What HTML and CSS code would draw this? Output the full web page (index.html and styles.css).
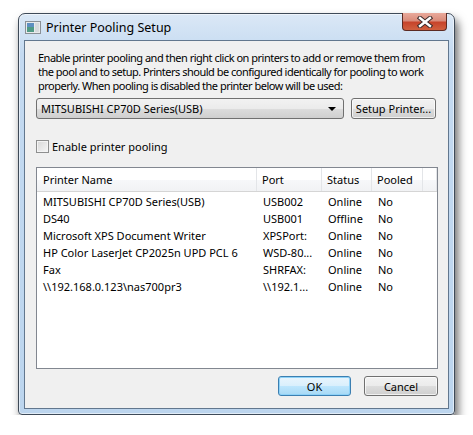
FILE: index.html
```html
<!DOCTYPE html>
<html lang="en">
<head>
<meta charset="UTF-8">
<meta name="viewport" content="width=device-width, initial-scale=1.0">
<title>Printer Pooling Setup</title>
<link rel="stylesheet" href="styles.css">
</head>
<body>

<div class="window">
    <div class="titlebar">
        <svg class="app-icon" width="16" height="13" viewBox="0 0 16 13">
            <rect x="0.5" y="0.5" width="15" height="12" fill="#e8eaec" stroke="#8a9096"/>
            <rect x="2" y="2" width="7" height="9" fill="#4f9a86"/>
            <rect x="2" y="2" width="7" height="4" fill="#5d8fc0"/>
            <rect x="10" y="2" width="4" height="9" fill="#d6dadd"/>
        </svg>
        <span class="title">Printer Pooling Setup</span>
        <div class="close">
            <svg width="16" height="12" viewBox="0 0 16 12">
                <path d="M3 2 L13 10 M13 2 L3 10" stroke="#3a2a2a" stroke-width="4.4" stroke-linecap="square"/>
                <path d="M3 2 L13 10 M13 2 L3 10" stroke="#ffffff" stroke-width="2.4" stroke-linecap="square"/>
            </svg>
        </div>
    </div>

    <div class="client">
        <p class="intro">Enable printer pooling and then right click on printers to add or remove them from<br>the pool and to setup. Printers should be configured identically for pooling to work<br>properly. When pooling is disabled the printer below will be used:</p>

        <div class="printer-row">
            <div class="combo">
                <span>MITSUBISHI CP70D Series(USB)</span>
                <span class="arrow"></span>
            </div>
            <button class="btn setup">Setup Printer...</button>
        </div>

        <label class="check"><span class="box"></span>Enable printer pooling</label>

        <div class="list">
            <div class="list-head">
                <div>Printer Name</div>
                <div>Port</div>
                <div>Status</div>
                <div>Pooled</div>
                <div></div>
            </div>
            <div class="list-row"><div>MITSUBISHI CP70D Series(USB)</div><div>USB002</div><div>Online</div><div>No</div></div>
            <div class="list-row"><div>DS40</div><div>USB001</div><div>Offline</div><div>No</div></div>
            <div class="list-row"><div>Microsoft XPS Document Writer</div><div>XPSPort:</div><div>Online</div><div>No</div></div>
            <div class="list-row"><div>HP Color LaserJet CP2025n UPD PCL 6</div><div>WSD-80...</div><div>Online</div><div>No</div></div>
            <div class="list-row"><div>Fax</div><div>SHRFAX:</div><div>Online</div><div>No</div></div>
            <div class="list-row"><div>\\192.168.0.123\nas700pr3</div><div>\\192.1...</div><div>Online</div><div>No</div></div>
        </div>

        <div class="actions">
            <button class="btn default">OK</button>
            <button class="btn cancel">Cancel</button>
        </div>
    </div>
</div>

</body>
</html>
```

FILE: styles.css
```css
body {
    margin: 0;
    padding: 13px 0 0 18px;
    background-color: #fff;
    font-family: "Noto Sans", "Open Sans", sans-serif;
    font-size: 11px;
    color: #000;
}
.window {
    width: 437px;
    height: 402px;
    box-sizing: border-box;
    border: 1px solid #3e4a58;
    border-radius: 7px 7px 4px 4px;
    background: linear-gradient(#dbe8f6, #c4daf1 40px, #bcd5ee);
    box-shadow: inset 0 0 0 1px rgba(255, 255, 255, 0.55), 3px 6px 10px rgba(0, 0, 0, 0.6);
    display: flex;
    flex-direction: column;
}
.titlebar {
    height: 26px;
    display: flex;
    align-items: center;
    padding-left: 6px;
}
.app-icon {
    flex: none;
    margin-top: 1px;
}
.title {
    margin-left: 5px;
    font-size: 12.5px;
    margin-top: 1px;
}
.close {
    align-self: flex-start;
    margin: -1px 7px 0 auto;
    width: 45px;
    height: 18px;
    box-sizing: border-box;
    border: 1px solid #5c2a22;
    border-top: none;
    border-radius: 0 0 4px 4px;
    background: linear-gradient(#e9a99b, #d98c7b 45%, #c7442b 55%, #d0603f);
    display: flex;
    align-items: center;
    justify-content: center;
}
.client {
    flex: 1;
    margin: 0 5px 5px 5px;
    border: 1px solid #62778e;
    background-color: #f0f0f0;
    padding: 10px 10px 0 11px;
}
.intro {
    margin: 0 0 5px 2px;
    line-height: 14px;
    letter-spacing: -0.5px;
    white-space: nowrap;
}
.printer-row {
    display: flex;
    gap: 7px;
    height: 21px;
}
.combo {
    width: 308px;
    box-sizing: border-box;
    border: 1px solid #707070;
    border-radius: 3px;
    background: linear-gradient(#f2f2f2, #ebebeb 50%, #dddddd 50%, #cfcfcf);
    display: flex;
    align-items: center;
    justify-content: space-between;
    padding: 0 7px 0 4px;
}
.arrow {
    width: 0;
    height: 0;
    border-left: 4px solid transparent;
    border-right: 4px solid transparent;
    border-top: 4px solid #000;
}
.btn {
    font-family: inherit;
    font-size: 11px;
    color: #000;
    border: 1px solid #707070;
    border-radius: 3px;
    background: linear-gradient(#f2f2f2, #ebebeb 50%, #dddddd 50%, #cfcfcf);
    box-shadow: inset 0 0 0 1px rgba(255, 255, 255, 0.7);
    padding: 0;
    cursor: pointer;
}
.setup {
    width: 85px;
}
.check {
    display: flex;
    align-items: center;
    height: 13px;
    margin-top: 21px;
}
.box {
    width: 13px;
    height: 13px;
    box-sizing: border-box;
    border: 1px solid #8e8f8f;
    background: linear-gradient(135deg, #d8d8d8, #f6f6f6);
    box-shadow: inset 0 0 0 1px #f4f4f4;
    margin-right: 3px;
}
.list {
    margin-top: 14px;
    height: 202px;
    box-sizing: border-box;
    border: 1px solid #828790;
    background-color: #fff;
}
.list-head, .list-row {
    display: grid;
    grid-template-columns: 220px 65px 50px 51px 1fr;
}
.list-head {
    height: 24px;
    box-sizing: border-box;
    border-bottom: 1px solid #d5d5d5;
    background: linear-gradient(#ffffff, #ffffff 50%, #f7f8fa 50%, #f1f2f4);
    margin-bottom: 1px;
}
.list-head div {
    border-right: 1px solid #e3e5e8;
    display: flex;
    align-items: center;
    padding-left: 5px;
}
.list-head div:first-child, .list-row div:first-child {
    padding-left: 6px;
}
.list-row {
    height: 17px;
    align-items: center;
}
.list-row div {
    padding-left: 6px;
    white-space: nowrap;
}
.actions {
    display: flex;
    justify-content: flex-end;
    gap: 13px;
    margin-top: 7px;
}
.actions .btn {
    height: 20px;
}
.default {
    width: 73px;
    border-color: #3c7fb1;
    background: linear-gradient(#e9f5fd, #d9effc 50%, #bee6fd 50%, #a7d9f5);
    box-shadow: inset 0 0 0 1px #8ed2f8;
}
.cancel {
    width: 74px;
}
```
